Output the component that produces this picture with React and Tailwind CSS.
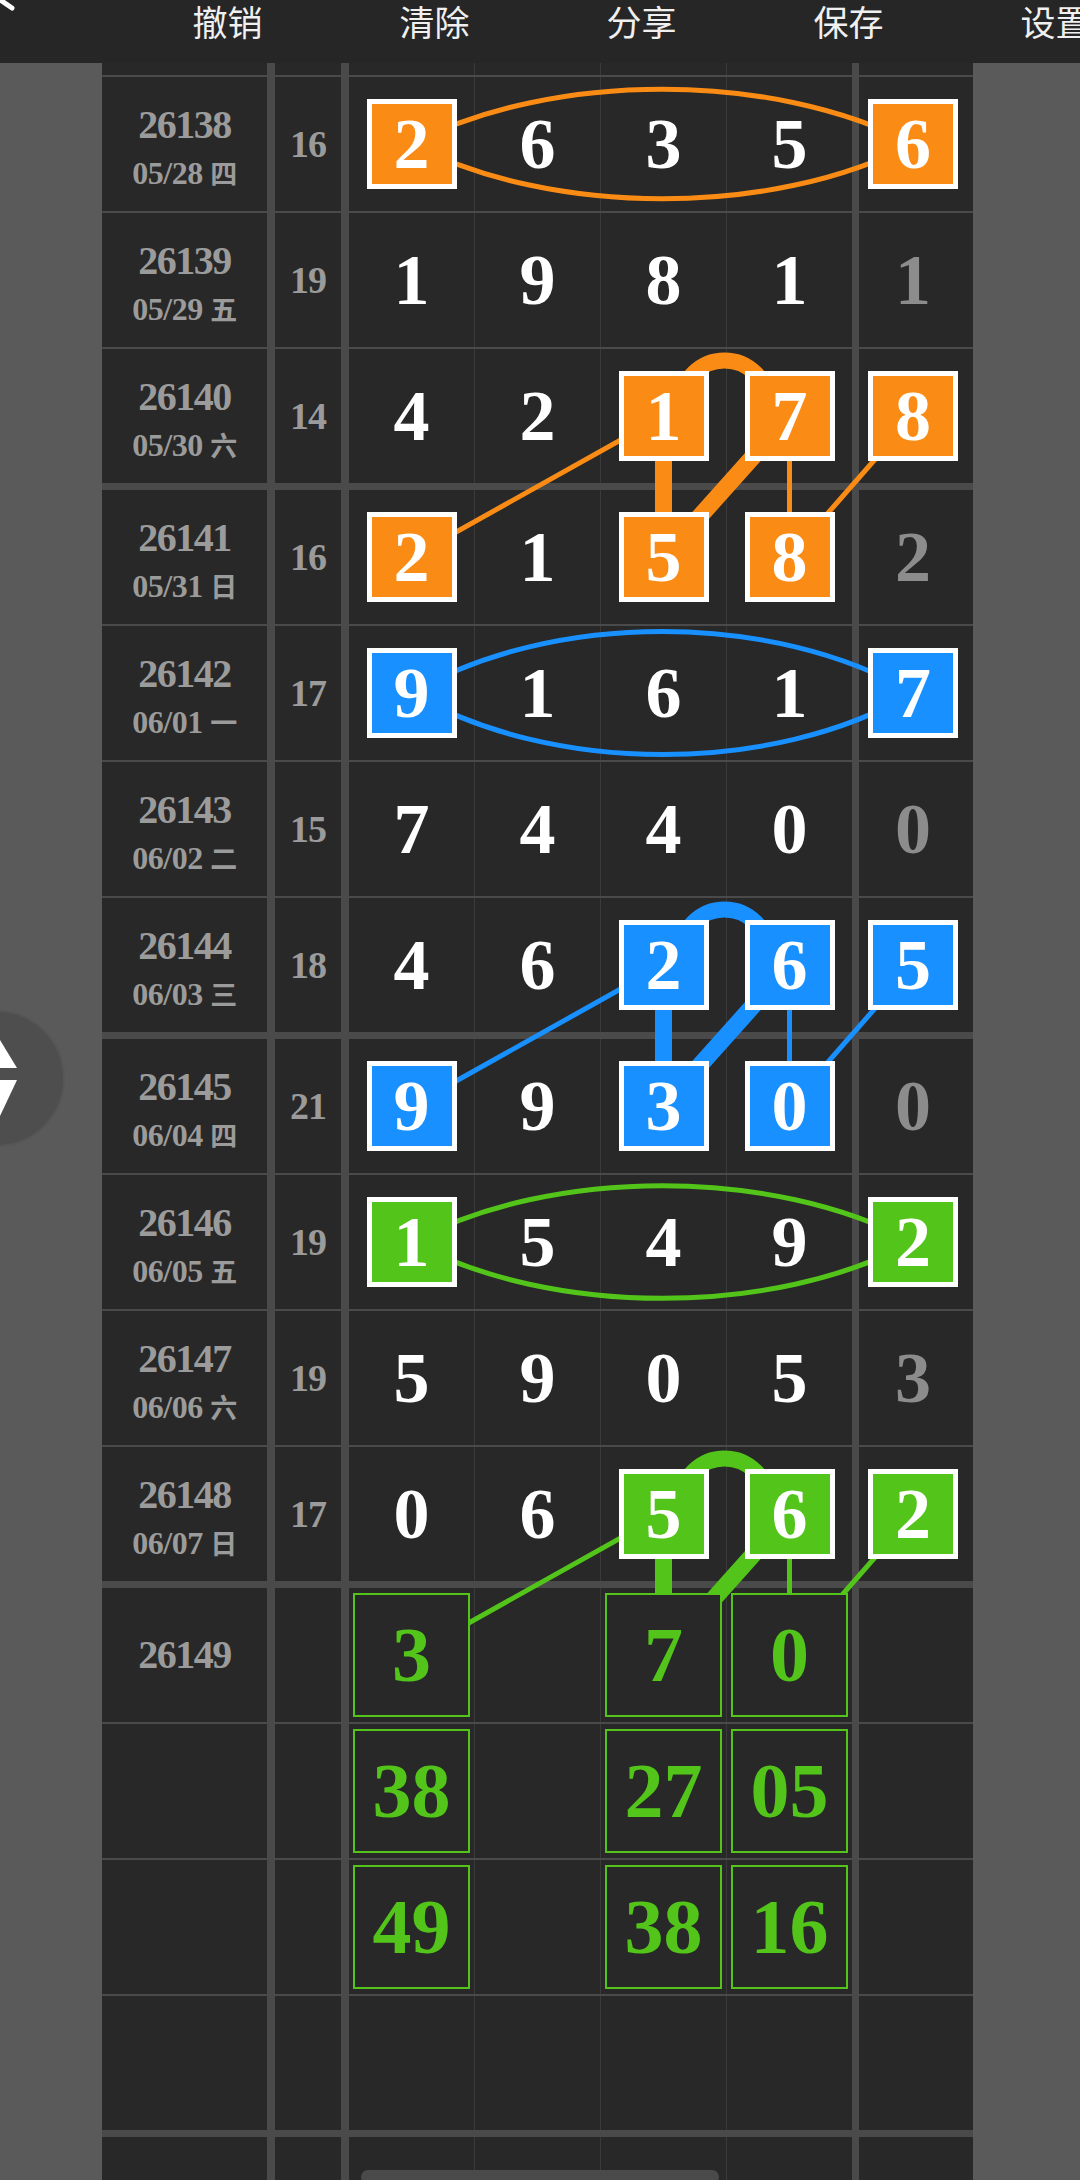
import React from "react";

const ROW_H = 134;

const rows = [
  { issue: "26138", date: "05/28", wd: "四", sum: 16, d: [2, 6, 3, 5], last: 6, box: { 0: "o", 4: "o" } },
  { issue: "26139", date: "05/29", wd: "五", sum: 19, d: [1, 9, 8, 1], last: 1 },
  { issue: "26140", date: "05/30", wd: "六", sum: 14, d: [4, 2, 1, 7], last: 8, box: { 2: "o", 3: "o", 4: "o" } },
  { issue: "26141", date: "05/31", wd: "日", sum: 16, d: [2, 1, 5, 8], last: 2, box: { 0: "o", 2: "o", 3: "o" }, thick: true },
  { issue: "26142", date: "06/01", wd: "一", sum: 17, d: [9, 1, 6, 1], last: 7, box: { 0: "b", 4: "b" } },
  { issue: "26143", date: "06/02", wd: "二", sum: 15, d: [7, 4, 4, 0], last: 0 },
  { issue: "26144", date: "06/03", wd: "三", sum: 18, d: [4, 6, 2, 6], last: 5, box: { 2: "b", 3: "b", 4: "b" } },
  { issue: "26145", date: "06/04", wd: "四", sum: 21, d: [9, 9, 3, 0], last: 0, box: { 0: "b", 2: "b", 3: "b" }, thick: true },
  { issue: "26146", date: "06/05", wd: "五", sum: 19, d: [1, 5, 4, 9], last: 2, box: { 0: "g", 4: "g" } },
  { issue: "26147", date: "06/06", wd: "六", sum: 19, d: [5, 9, 0, 5], last: 3 },
  { issue: "26148", date: "06/07", wd: "日", sum: 17, d: [0, 6, 5, 6], last: 2, box: { 2: "g", 3: "g", 4: "g" } },
  { issue: "26149", pred: ["3", null, "7", "0"], thick: true },
  { pred: ["38", null, "27", "05"] },
  { pred: ["49", null, "38", "16"] },
  {},
  { thick: true },
];

const boxBg = { o: "bg-[#fa8c16]", b: "bg-[#1890ff]", g: "bg-[#52c41a]" };
const stroke = { o: "#fa8c16", b: "#1890ff", g: "#52c41a" };

// column centres inside the table (px)
const COLX = [309.5, 435.5, 561.5, 687.5, 811];

// row centres, same maths as the flow layout below
const centres = [];
{
  let y = 12;
  rows.forEach((r) => {
    y += r.thick ? 7 : 2;
    centres.push(y + ROW_H / 2);
    y += ROW_H;
  });
}

const headerItems = ["撤销", "清除", "分享", "保存", "设置"];

const serif = "font-['Liberation_Serif','Noto_Sans_CJK_SC',serif]";

const Digit = ({ n, color, gray }) => {
  if (color) {
    return (
      <div className={`relative z-10 flex h-[90px] w-[90px] items-center justify-center border-[5px] border-white ${boxBg[color]} text-white`}>
        {n}
      </div>
    );
  }
  return <span className={gray ? "text-[#8c8c8c]" : "text-white"}>{n}</span>;
};

const Pred = ({ v }) =>
  v ? (
    <div className="relative z-10 flex h-full w-full items-center justify-center border-2 border-[#52c41a] bg-[#282828] text-[78px] text-[#52c41a]">
      {v}
    </div>
  ) : null;

const Row = ({ r }) => {
  const box = r.box || {};
  const cell = "flex items-center justify-center bg-[#282828]";
  const digitCell = (i) => {
    if (r.pred) return <Pred v={r.pred[i]} />;
    if (!r.d) return null;
    return <Digit n={r.d[i]} color={box[i]} />;
  };
  const digitPad = r.pred ? "px-[4px] py-[5px]" : "";
  return (
    <div className={`flex h-[134px] ${r.thick ? "mt-[7px]" : "mt-[2px]"} ${serif} font-bold leading-none`}>
      <div className={`${cell} w-[165px] flex-col text-[#9b9b9b]`}>
        {r.issue && (
          <div className={r.date ? "pt-[6px] text-center" : "text-center"}>
            <div className="text-[40px] tracking-[-1.5px]">{r.issue}</div>
            {r.date && (
              <div className="mt-[12px] whitespace-nowrap text-[32px] tracking-[-0.5px]">
                {r.date} <span className="font-['Noto_Sans_CJK_SC',sans-serif] text-[27px] font-bold">{r.wd}</span>
              </div>
            )}
          </div>
        )}
      </div>
      <div className={`${cell} ml-[8px] w-[66px] text-[38px] text-[#9b9b9b] tracking-[-1px]`}>{r.sum}</div>
      <div className="ml-[8px] flex text-[72px]">
        <div className={`${cell} w-[125px] ${digitPad}`}>{digitCell(0)}</div>
        <div className={`${cell} w-[126px] border-l border-[#3a3a3a] ${digitPad}`}>{digitCell(1)}</div>
        <div className={`${cell} w-[126px] border-l border-[#3a3a3a] ${digitPad}`}>{digitCell(2)}</div>
        <div className={`${cell} w-[126px] border-l border-[#3a3a3a] ${digitPad}`}>{digitCell(3)}</div>
      </div>
      <div className={`${cell} ml-[7px] w-[114px] pr-[6px] text-[72px]`}>
        {r.d && <Digit n={r.last} color={box[4]} gray />}
      </div>
    </div>
  );
};

// lens shaped pair of curves joining first digit box and last column box
const Lens = ({ row, c, h = 80 }) => {
  const y = centres[row];
  const x1 = COLX[0];
  const x2 = COLX[4];
  const a = 140;
  return (
    <g fill="none" stroke={stroke[c]} strokeWidth="5">
      <path d={`M ${x1} ${y} C ${x1 + a} ${y - h} ${x2 - a} ${y - h} ${x2} ${y}`} />
      <path d={`M ${x1} ${y} C ${x1 + a} ${y + h} ${x2 - a} ${y + h} ${x2} ${y}`} />
    </g>
  );
};

const Link = ({ a, b, c }) => {
  const ya = centres[a];
  const yb = centres[b];
  const s = stroke[c];
  const ax = (COLX[2] + COLX[3]) / 2 - 2;
  const ay = ya - 12;
  const r = 43.6;
  return (
    <g stroke={s} fill="none">
      <line x1={COLX[0]} y1={yb} x2={COLX[2]} y2={ya} strokeWidth="5" />
      <line x1={COLX[2]} y1={ya} x2={COLX[2]} y2={yb} strokeWidth="17" />
      <line x1={COLX[3]} y1={ya} x2={COLX[2]} y2={yb} strokeWidth="17" />
      <line x1={COLX[3]} y1={ya} x2={COLX[3]} y2={yb} strokeWidth="5" />
      <line x1={COLX[4]} y1={ya} x2={COLX[3]} y2={yb} strokeWidth="5" />
      <path d={`M ${ax - r} ${ay} A ${r} ${r} 0 0 1 ${ax + r} ${ay}`} strokeWidth="16" />
    </g>
  );
};

export default function App() {
  return (
    <div className="relative h-[2180px] w-[1080px] overflow-hidden bg-[#5a5a5a]">
      {/* top bar */}
      <div className="relative h-[63px] bg-[#262626]">
        <svg className="absolute left-0 top-0" width="20" height="14">
          <line x1="-4" y1="-3" x2="12" y2="8" stroke="#fff" strokeWidth="5" strokeLinecap="round" />
        </svg>
        <div className="flex whitespace-nowrap pl-[124px] pt-[2px]">
          {headerItems.map((t) => (
            <div key={t} className="w-[207px] shrink-0 text-center font-['Noto_Sans_CJK_SC',sans-serif] text-[35px] leading-[38px] text-[#f0f0f0]">
              {t}
            </div>
          ))}
        </div>
      </div>

      <div className="flex">
        <div className="w-[102px] shrink-0" />
        <div className="relative w-[871px] shrink-0 bg-[#4a4a4a]">
          {/* partially scrolled row */}
          <div className="flex h-[12px]">
            <div className="w-[165px] bg-[#282828]" />
            <div className="ml-[8px] w-[66px] bg-[#282828]" />
            <div className="ml-[8px] flex">
              <div className="w-[125px] bg-[#282828]" />
              <div className="w-[126px] border-l border-[#3a3a3a] bg-[#282828]" />
              <div className="w-[126px] border-l border-[#3a3a3a] bg-[#282828]" />
              <div className="w-[126px] border-l border-[#3a3a3a] bg-[#282828]" />
            </div>
            <div className="ml-[7px] w-[114px] bg-[#282828]" />
          </div>
          {rows.map((r, i) => (
            <Row key={i} r={r} />
          ))}

          <svg className="pointer-events-none absolute left-0 top-0" width="871" height="2220">
            <Lens row={0} c="o" h={73} />
            <Link a={2} b={3} c="o" />
            <Lens row={4} c="b" h={82} />
            <Link a={6} b={7} c="b" />
            <Lens row={8} c="g" h={75} />
            <Link a={10} b={11} c="g" />
          </svg>
        </div>
      </div>

      {/* floating sort button */}
      <div className="absolute left-[-72px] top-[1010px] h-[137px] w-[137px] rounded-full border-2 border-[#565656] bg-[#4e4e4e]" />
      <svg className="absolute left-[-20px] top-[1036px]" width="40" height="84">
        <polygon points="20,4 3,32 37,32" fill="#fff" />
        <polygon points="3,44 37,44 20,80" fill="#fff" />
      </svg>

      {/* scroll indicator */}
      <div className="absolute left-[361px] top-[2170px] h-[14px] w-[358px] rounded-full bg-[#4a4a4a]" />
    </div>
  );
}
